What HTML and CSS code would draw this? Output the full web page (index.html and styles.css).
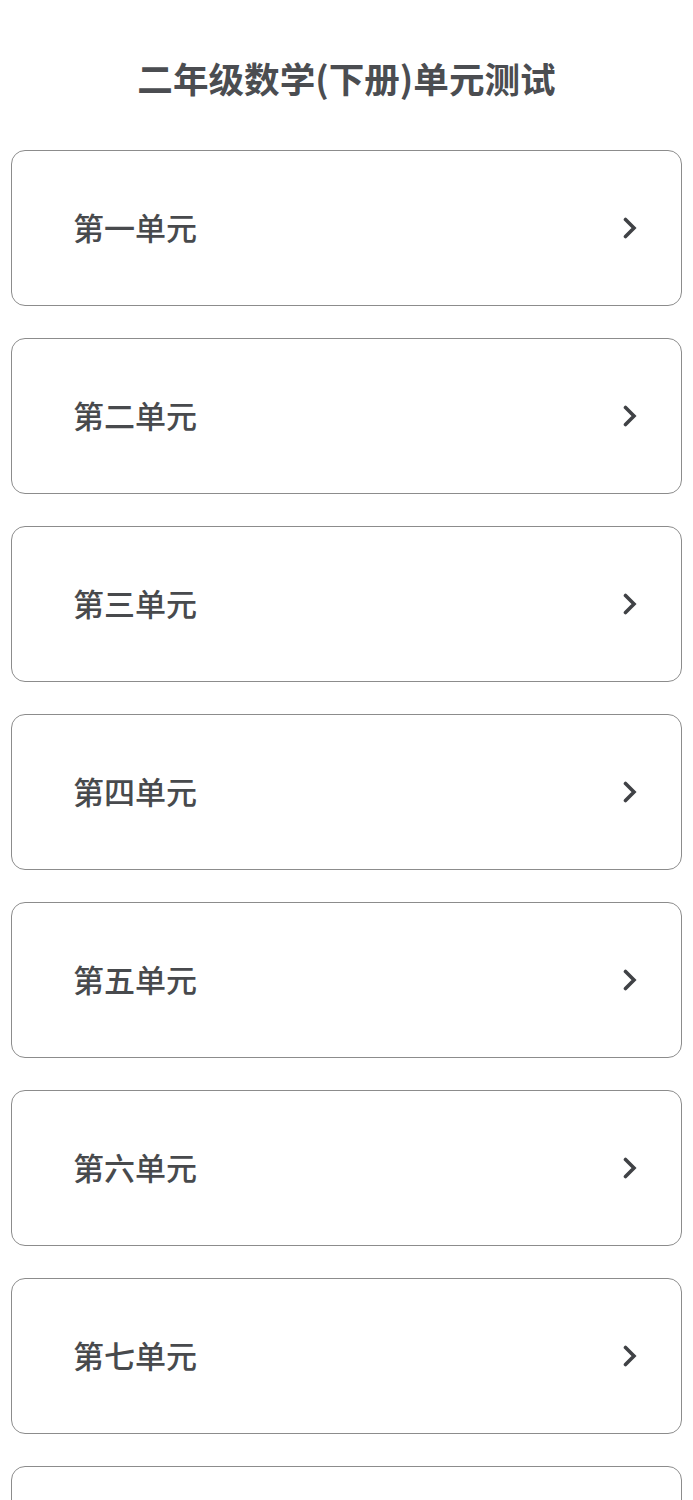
FILE: index.html
```html
<!DOCTYPE html>
<html lang="zh-CN">
<head>
    <meta charset="UTF-8">
    <meta name="viewport" content="width=device-width, initial-scale=1.0">
    <title>二年级数学(下册)单元测试</title>
    <link rel="stylesheet" href="styles.css">
</head>
<body>
    <div class="page">
        <h1 class="page__title">二年级数学(下册)单元测试</h1>
        <div class="unit-list">
            <a class="unit" href="#"><span class="unit__name">第一单元</span><svg class="unit__arrow" viewBox="0 0 14 22"><path d="M2.5 2.5 L11 11 L2.5 19.5"/></svg></a>
            <a class="unit" href="#"><span class="unit__name">第二单元</span><svg class="unit__arrow" viewBox="0 0 14 22"><path d="M2.5 2.5 L11 11 L2.5 19.5"/></svg></a>
            <a class="unit" href="#"><span class="unit__name">第三单元</span><svg class="unit__arrow" viewBox="0 0 14 22"><path d="M2.5 2.5 L11 11 L2.5 19.5"/></svg></a>
            <a class="unit" href="#"><span class="unit__name">第四单元</span><svg class="unit__arrow" viewBox="0 0 14 22"><path d="M2.5 2.5 L11 11 L2.5 19.5"/></svg></a>
            <a class="unit" href="#"><span class="unit__name">第五单元</span><svg class="unit__arrow" viewBox="0 0 14 22"><path d="M2.5 2.5 L11 11 L2.5 19.5"/></svg></a>
            <a class="unit" href="#"><span class="unit__name">第六单元</span><svg class="unit__arrow" viewBox="0 0 14 22"><path d="M2.5 2.5 L11 11 L2.5 19.5"/></svg></a>
            <a class="unit" href="#"><span class="unit__name">第七单元</span><svg class="unit__arrow" viewBox="0 0 14 22"><path d="M2.5 2.5 L11 11 L2.5 19.5"/></svg></a>
            <a class="unit" href="#"><span class="unit__name">第八单元</span><svg class="unit__arrow" viewBox="0 0 14 22"><path d="M2.5 2.5 L11 11 L2.5 19.5"/></svg></a>
        </div>
    </div>
</body>
</html>
```

FILE: styles.css
```css
html {
    box-sizing: border-box;
}
*, *::before, *::after {
    box-sizing: inherit;
}
body {
    margin: 0;
    background: #fff;
    font-family: "Noto Sans CJK SC", "Noto Sans", sans-serif;
    color: #4a4a4a;
}
.page {
    padding: 0 11px;
}
.page__title {
    margin: 0;
    padding: 52px 0 46px;
    text-align: center;
    font-size: 35.6px;
    font-weight: 700;
    line-height: 52px;
    color: #4b4d51;
}
.unit-list {
    display: flex;
    flex-direction: column;
    gap: 32px;
}
.unit {
    display: flex;
    align-items: center;
    justify-content: space-between;
    height: 156px;
    padding: 0 44px 0 61px;
    border: 1px solid #8c8c8c;
    border-radius: 14px;
    text-decoration: none;
    color: #484a4d;
}
.unit__name {
    font-size: 31px;
    font-weight: 500;
    position: relative;
    top: -2px;
}
.unit__arrow {
    width: 14px;
    height: 22px;
    fill: none;
    stroke: #404246;
    stroke-width: 3.6;
    stroke-linecap: round;
    stroke-linejoin: miter;
}
```
